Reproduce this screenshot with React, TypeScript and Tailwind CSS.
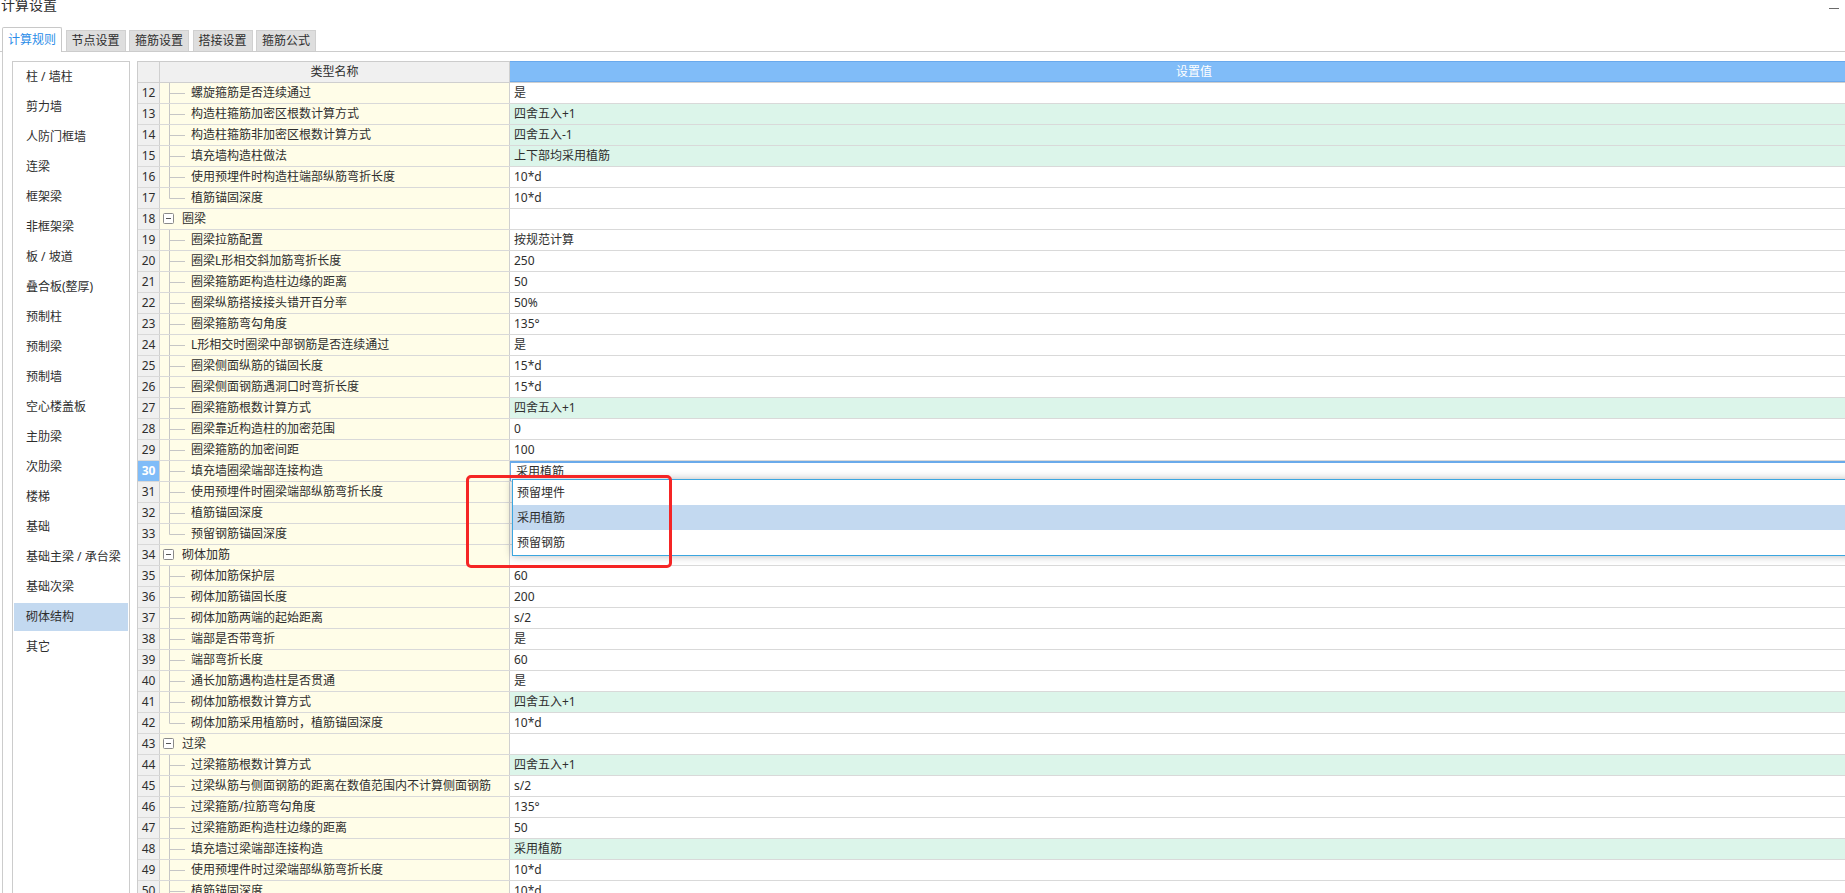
import React from 'react';

interface Row {
  n: number;
  name: string;
  value?: string;
  green?: boolean;
  group?: boolean;
  last?: boolean;
  editing?: boolean;
}

const tabs = ['计算规则', '节点设置', '箍筋设置', '搭接设置', '箍筋公式'];

const sideItems = [
  '柱 / 墙柱',
  '剪力墙',
  '人防门框墙',
  '连梁',
  '框架梁',
  '非框架梁',
  '板 / 坡道',
  '叠合板(整厚)',
  '预制柱',
  '预制梁',
  '预制墙',
  '空心楼盖板',
  '主肋梁',
  '次肋梁',
  '楼梯',
  '基础',
  '基础主梁 / 承台梁',
  '基础次梁',
  '砌体结构',
  '其它',
];

// rows 31-33 values sit under the open dropdown, so they are left blank
const rows: Row[] = [
  { n: 12, name: '螺旋箍筋是否连续通过', value: '是' },
  { n: 13, name: '构造柱箍筋加密区根数计算方式', value: '四舍五入+1', green: true },
  { n: 14, name: '构造柱箍筋非加密区根数计算方式', value: '四舍五入-1', green: true },
  { n: 15, name: '填充墙构造柱做法', value: '上下部均采用植筋', green: true },
  { n: 16, name: '使用预埋件时构造柱端部纵筋弯折长度', value: '10*d' },
  { n: 17, name: '植筋锚固深度', value: '10*d', last: true },
  { n: 18, name: '圈梁', group: true },
  { n: 19, name: '圈梁拉筋配置', value: '按规范计算' },
  { n: 20, name: '圈梁L形相交斜加筋弯折长度', value: '250' },
  { n: 21, name: '圈梁箍筋距构造柱边缘的距离', value: '50' },
  { n: 22, name: '圈梁纵筋搭接接头错开百分率', value: '50%' },
  { n: 23, name: '圈梁箍筋弯勾角度', value: '135°' },
  { n: 24, name: 'L形相交时圈梁中部钢筋是否连续通过', value: '是' },
  { n: 25, name: '圈梁侧面纵筋的锚固长度', value: '15*d' },
  { n: 26, name: '圈梁侧面钢筋遇洞口时弯折长度', value: '15*d' },
  { n: 27, name: '圈梁箍筋根数计算方式', value: '四舍五入+1', green: true },
  { n: 28, name: '圈梁靠近构造柱的加密范围', value: '0' },
  { n: 29, name: '圈梁箍筋的加密间距', value: '100' },
  { n: 30, name: '填充墙圈梁端部连接构造', value: '采用植筋', editing: true },
  { n: 31, name: '使用预埋件时圈梁端部纵筋弯折长度' },
  { n: 32, name: '植筋锚固深度' },
  { n: 33, name: '预留钢筋锚固深度', last: true },
  { n: 34, name: '砌体加筋', group: true },
  { n: 35, name: '砌体加筋保护层', value: '60' },
  { n: 36, name: '砌体加筋锚固长度', value: '200' },
  { n: 37, name: '砌体加筋两端的起始距离', value: 's/2' },
  { n: 38, name: '端部是否带弯折', value: '是' },
  { n: 39, name: '端部弯折长度', value: '60' },
  { n: 40, name: '通长加筋遇构造柱是否贯通', value: '是' },
  { n: 41, name: '砌体加筋根数计算方式', value: '四舍五入+1', green: true },
  { n: 42, name: '砌体加筋采用植筋时，植筋锚固深度', value: '10*d', last: true },
  { n: 43, name: '过梁', group: true },
  { n: 44, name: '过梁箍筋根数计算方式', value: '四舍五入+1', green: true },
  { n: 45, name: '过梁纵筋与侧面钢筋的距离在数值范围内不计算侧面钢筋', value: 's/2' },
  { n: 46, name: '过梁箍筋/拉筋弯勾角度', value: '135°' },
  { n: 47, name: '过梁箍筋距构造柱边缘的距离', value: '50' },
  { n: 48, name: '填充墙过梁端部连接构造', value: '采用植筋', green: true },
  { n: 49, name: '使用预埋件时过梁端部纵筋弯折长度', value: '10*d' },
  { n: 50, name: '植筋锚固深度', value: '10*d' },
];

const options = ['预留埋件', '采用植筋', '预留钢筋'];

function TreeLine({ last }: { last?: boolean }) {
  return (
    <svg width="31" height="20" className="shrink-0">
      <line x1="9.5" y1="0" x2="9.5" y2={last ? 10.5 : 20} stroke="#c6c6c6" strokeWidth="1" />
      <line x1="9.5" y1="10.5" x2="25" y2="10.5" stroke="#c6c6c6" strokeWidth="1" />
    </svg>
  );
}

function CollapseBox() {
  return (
    <svg width="12" height="12" className="shrink-0 ml-[3px]">
      <rect x="0.5" y="0.5" width="10" height="10" rx="1" fill="#fff" stroke="#8a8a8a" />
      <line x1="3" y1="5.5" x2="8" y2="5.5" stroke="#555" strokeWidth="1" />
    </svg>
  );
}

function TableRow({ row }: { row: Row }) {
  return (
    <div className="flex h-[21px] border-b border-[#d9d9d9]">
      <div
        className={`w-[22px] shrink-0 border-r border-[#d0d0d0] flex items-center justify-center ${
          row.editing ? 'bg-[#80bcf8] text-white font-bold' : 'bg-[#f0f0f0]'
        }`}
      >
        {row.n}
      </div>
      <div className="w-[350px] shrink-0 border-r border-[#d0d0d0] bg-[#fffde8] flex items-center whitespace-nowrap overflow-hidden">
        {row.group ? (
          <>
            <CollapseBox />
            <span className="ml-[7px]">{row.name}</span>
          </>
        ) : (
          <>
            <TreeLine last={row.last} />
            <span>{row.name}</span>
          </>
        )}
      </div>
      <div
        className={`w-[1368px] shrink-0 flex items-center pl-[4px] ${
          row.green ? 'bg-[#dcf5ea]' : 'bg-white'
        } ${row.editing ? 'shadow-[inset_0_2px_0_#6aaaea,inset_1px_0_0_#6aaaea] pl-[6px] pt-[1px]' : ''}`}
      >
        {row.value}
      </div>
    </div>
  );
}

export default function App() {
  return (
    <div className="relative w-[1845px] h-[893px] overflow-hidden bg-white text-[#2e2e2e] text-[12px] font-['Noto_Sans','Noto_Sans_CJK_SC',sans-serif]">
      {/* Title bar */}
      <div className="flex justify-between h-[27px]">
        <div className="text-[14px] leading-[14px] -mt-[2px] pl-[1px]">计算设置</div>
        <div className="w-[10px] h-px bg-[#6a6a6a] mt-[8px] mr-[6px]"></div>
      </div>

      {/* Tabs */}
      <div className="flex items-end gap-[3.5px] h-[25px] pl-[2px] border-b border-[#cccccc]">
        {tabs.map((t, i) => (
          <div
            key={t}
            className={
              i === 0
                ? 'w-[60px] h-[25px] -mb-px bg-white border border-b-0 border-[#c8c8c8] rounded-t-[2px] flex items-center justify-center text-[#2b8de8]'
                : 'w-[60px] h-[21px] bg-[#dedede] border border-b-0 border-[#d0d0d0] flex items-center justify-center'
            }
          >
            {t}
          </div>
        ))}
      </div>

      {/* Content */}
      <div className="flex ml-[2px] border-l border-[#cccccc] pl-[9px] pt-[9px]">
        {/* Sidebar */}
        <div className="w-[118px] h-[840px] shrink-0 border border-[#cccccc] bg-white pt-[1px]">
          {sideItems.map((s) => (
            <div
              key={s}
              className={`h-[28px] mb-[2px] mx-[1px] pl-[12px] flex items-center whitespace-nowrap ${
                s === '砌体结构' ? 'bg-[#c3d9f0]' : ''
              }`}
            >
              {s}
            </div>
          ))}
        </div>

        {/* Table */}
        <div className="ml-[7px] border-l border-t border-[#cccccc] shrink-0">
          <div className="flex h-[21px] border-b border-[#cfcfcf]">
            <div className="w-[22px] shrink-0 bg-[#f0f0f0] border-r border-[#d0d0d0]"></div>
            <div className="w-[350px] shrink-0 bg-[#f0f0f0] border-r border-[#d0d0d0] flex items-center justify-center">
              类型名称
            </div>
            <div className="w-[1368px] shrink-0 bg-[#80bcf8] border-y border-[#6aa9ec] -mt-px h-[21px] flex items-center justify-center text-white">
              设置值
            </div>
          </div>
          {rows.map((r) => (
            <TableRow key={r.n} row={r} />
          ))}
        </div>
      </div>

      {/* Dropdown list */}
      <div className="absolute left-[512px] top-[479px] w-[1340px] bg-white border-y border-l border-[#3ba6e0] shadow-[0_0_8px_rgba(0,0,0,0.28)]">
        {options.map((o) => (
          <div
            key={o}
            className={`h-[25px] pl-[4px] flex items-center ${o === '采用植筋' ? 'bg-[#c3d9f0]' : ''}`}
          >
            {o}
          </div>
        ))}
      </div>

      {/* Red annotation box */}
      <div className="absolute left-[466px] top-[475px] w-[206px] h-[93px] border-[3px] border-[#f52525] rounded-[5px]"></div>
    </div>
  );
}
